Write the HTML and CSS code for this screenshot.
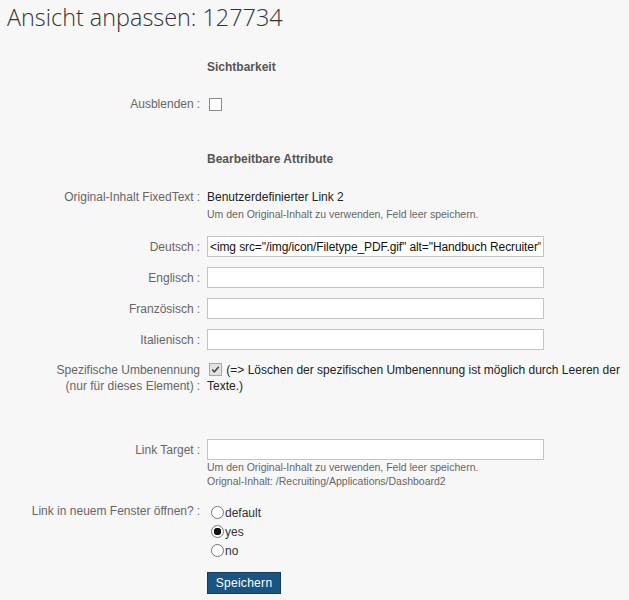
FILE: index.html
```html
<!DOCTYPE html>
<html lang="de">
<head>
    <meta charset="UTF-8">
    <meta name="viewport" content="width=device-width, initial-scale=1.0">
    <title>Ansicht anpassen</title>
    <link rel="stylesheet" href="styles.css">
</head>
<body>
    <h1 class="page-title">Ansicht anpassen: 127734</h1>

    <form class="view-form">
        <!-- Sichtbarkeit -->
        <div class="row section" id="sec-visibility">
            <div class="label"></div>
            <div class="field section-title">Sichtbarkeit</div>
        </div>

        <div class="row" id="row-hide">
            <label class="label">Ausblenden<span class="colon">:</span></label>
            <div class="field"><span class="checkbox"></span></div>
        </div>

        <!-- Bearbeitbare Attribute -->
        <div class="row section" id="sec-attributes">
            <div class="label"></div>
            <div class="field section-title">Bearbeitbare Attribute</div>
        </div>

        <div class="row" id="row-original">
            <label class="label">Original-Inhalt FixedText<span class="colon">:</span></label>
            <div class="field">
                <div class="value">Benutzerdefinierter Link 2</div>
                <div class="note">Um den Original-Inhalt zu verwenden, Feld leer speichern.</div>
            </div>
        </div>

        <div class="row input-row" id="row-de">
            <label class="label">Deutsch<span class="colon">:</span></label>
            <div class="field"><input class="text-input" type="text" value='&lt;img src="/img/icon/Filetype_PDF.gif" alt="Handbuch Recruiter" /&gt;'></div>
        </div>

        <div class="row input-row" id="row-en">
            <label class="label">Englisch<span class="colon">:</span></label>
            <div class="field"><input class="text-input" type="text"></div>
        </div>

        <div class="row input-row" id="row-fr">
            <label class="label">Französisch<span class="colon">:</span></label>
            <div class="field"><input class="text-input" type="text"></div>
        </div>

        <div class="row input-row" id="row-it">
            <label class="label">Italienisch<span class="colon">:</span></label>
            <div class="field"><input class="text-input" type="text"></div>
        </div>

        <div class="row" id="row-specific">
            <label class="label">Spezifische Umbenennung<br>(nur für dieses Element)<span class="colon">:</span></label>
            <div class="field value">
                <span class="checkbox checked">
                    <svg viewBox="0 0 11 11" width="11" height="11"><path d="M2.2 5.6 L4.4 7.8 L8.8 2.8" fill="none" stroke="#4a4a4a" stroke-width="1.6"/></svg>
                </span>
                (=&gt; Löschen der spezifischen Umbenennung ist möglich durch Leeren der Texte.)
            </div>
        </div>

        <div class="row input-row" id="row-target">
            <label class="label">Link Target<span class="colon">:</span></label>
            <div class="field">
                <input class="text-input" type="text">
                <div class="note">Um den Original-Inhalt zu verwenden, Feld leer speichern.</div>
                <div class="note">Orignal-Inhalt: /Recruiting/Applications/Dashboard2</div>
            </div>
        </div>

        <div class="row" id="row-window">
            <label class="label">Link in neuem Fenster öffnen?<span class="colon">:</span></label>
            <div class="field radios">
                <label class="radio-option"><input type="radio" name="newwin" value="default">default</label>
                <label class="radio-option"><input type="radio" name="newwin" value="yes" checked>yes</label>
                <label class="radio-option"><input type="radio" name="newwin" value="no">no</label>
            </div>
        </div>

        <div class="row" id="row-submit">
            <div class="label"></div>
            <div class="field"><button class="btn-save" type="submit">Speichern</button></div>
        </div>
    </form>
</body>
</html>
```

FILE: styles.css
```css
body {
    margin: 0;
    padding: 0 8px;
    background-color: #f7f7f7;
    font-family: "Liberation Sans", Arial, sans-serif;
    font-size: 12px;
    color: #333;
}

.page-title {
    font-family: "Open Sans", "Noto Sans", sans-serif;
    font-weight: 300;
    font-size: 23.4px;
    line-height: 32px;
    color: #333;
    margin: 1px 0 0 -1px;
}

.view-form {
    display: flex;
    flex-direction: column;
}

.row {
    display: grid;
    grid-template-columns: 192px 1fr;
    column-gap: 7px;
    line-height: 16px;
}

.label {
    text-align: right;
    color: #666;
}

.colon {
    margin-left: 3px;
}

.section-title {
    font-weight: bold;
    color: #555;
}

.value {
    color: #222;
}

.note {
    font-size: 10.5px;
    line-height: 14px;
    color: #666;
}

/* vertical rhythm */
#sec-visibility { margin-top: 26px; }
#row-hide { margin-top: 21px; }
#sec-attributes { margin-top: 39px; }
#row-original { margin-top: 22px; }
#row-original .note { line-height: 16px; margin-top: 1px; }
#row-de { margin-top: 14px; }
#row-en, #row-fr, #row-it { margin-top: 9px; }
#row-specific { margin-top: 11px; }
#row-target { margin-top: 45px; }
#row-target .note:first-of-type { margin-top: 0; }
#row-window { margin-top: 15px; }
#row-submit { margin-top: 12px; }

.input-row .label {
    line-height: 22px;
}

.text-input {
    box-sizing: border-box;
    width: 337px;
    height: 21px;
    margin: 0;
    padding: 0 2px;
    border: 1px solid #c4c4c4;
    background: #fff;
    font-family: "Liberation Sans", Arial, sans-serif;
    font-size: 12px;
    letter-spacing: -0.1px;
    color: #111;
    outline: none;
}

.checkbox {
    display: inline-block;
    box-sizing: border-box;
    width: 13px;
    height: 13px;
    margin: 2px 0 0 2px;
    border: 1px solid #8a8a8a;
    background: #fff;
    vertical-align: top;
}

.checkbox.checked {
    background: #e2e2e2;
    border-color: #a8a8a8;
    margin: 1px 1px 0 2px;
}

.checkbox svg {
    display: block;
}

.radios {
    display: flex;
    flex-direction: column;
    color: #333;
}

.radio-option {
    display: flex;
    align-items: center;
    height: 19px;
}

.radio-option input {
    appearance: none;
    -webkit-appearance: none;
    box-sizing: border-box;
    width: 13px;
    height: 13px;
    margin: 0 1px 0 4px;
    border: 1px solid #777;
    border-radius: 50%;
    background: #fff;
}

.radio-option input:checked {
    background: radial-gradient(circle, #111 0 3.5px, #fff 4px);
}

.btn-save {
    width: 74px;
    height: 22px;
    padding: 0;
    border: 1px solid #0e3e63;
    background-color: #1a5582;
    color: #fff;
    font-family: "Liberation Sans", Arial, sans-serif;
    font-size: 12px;
    letter-spacing: 0.3px;
}
```
